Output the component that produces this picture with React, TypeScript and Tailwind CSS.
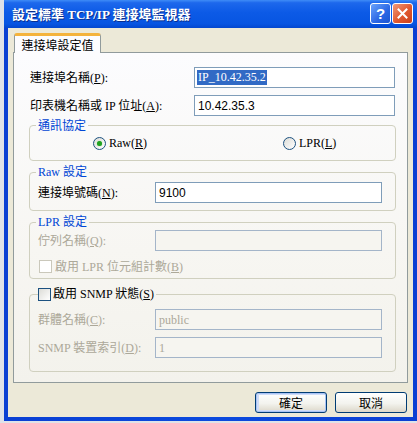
import React from "react";

const Mn = ({ t, k, colon = true }: { t: string; k: string; colon?: boolean }) => (
  <span className="whitespace-nowrap">
    {t}(<span className="underline">{k}</span>){colon ? ":" : ""}
  </span>
);

const Radio = ({ checked }: { checked?: boolean }) => (
  <span className="w-[13px] h-[13px] rounded-full border border-[#1c5180] bg-[linear-gradient(135deg,#dcdcd7,#ffffff)] flex items-center justify-center shrink-0">
    {checked && <span className="w-[5px] h-[5px] rounded-full bg-[#21a121] shadow-[0_0_1px_#5fcf5f]" />}
  </span>
);

const Check = ({ disabled }: { disabled?: boolean }) => (
  <span
    className={
      disabled
        ? "w-[13px] h-[13px] border border-[#cac8bb] bg-white shrink-0"
        : "w-[13px] h-[13px] border border-[#1c5180] bg-[linear-gradient(135deg,#dcdcd7,#ffffff)] shrink-0"
    }
  />
);

export default function App() {
  return (
    <div className="w-[417px] h-[423px] bg-[#dfe2e8] pl-[4px] overflow-hidden font-['Liberation_Serif','Noto_Sans_CJK_TC',serif] text-[12px] text-black">
      <div className="w-[413px] h-[421px] flex flex-col bg-[linear-gradient(to_right,#0a3fd3,#0b4ade_50%,#0a3fd3)]">
        {/* Title bar */}
        <div className="h-[28px] shrink-0 flex items-center pl-[8px] pr-[4px] bg-[linear-gradient(to_bottom,#3f8cf7_0%,#1d68ec_10%,#0c5ae6_45%,#0755e2_85%,#0347cf_100%)]">
          <span className="text-white font-bold text-[13px] leading-none [text-shadow:1px_1px_0_#0a2f8f] font-['Liberation_Serif','Noto_Sans_CJK_TC',serif]">
            設定標準 TCP/IP 連接埠監視器
          </span>
          <div className="ml-auto flex gap-[1px] mt-[-2px]">
            <div className="w-[21px] h-[21px] rounded-[3px] border border-white bg-[linear-gradient(135deg,#6aa3fb,#2a66e4_60%,#1d55d0)] flex items-center justify-center">
              <span className="text-white font-bold text-[15px] leading-none font-['Liberation_Sans',sans-serif]">?</span>
            </div>
            <div className="w-[21px] h-[21px] rounded-[3px] border border-white bg-[linear-gradient(135deg,#f09a7a,#e0582f_55%,#c8401c)] flex items-center justify-center">
              <svg width="11" height="11" viewBox="0 0 11 11">
                <path d="M1.5 1.5 L9.5 9.5 M9.5 1.5 L1.5 9.5" stroke="white" strokeWidth="2" strokeLinecap="square" />
              </svg>
            </div>
          </div>
        </div>

        {/* Client area */}
        <div className="relative h-[389px] mx-[4px] bg-[#ece9d8] flex flex-col pt-[5px]">
          {/* Tab */}
          <div className="pl-[6px] flex relative z-10">
            <div className="w-[87px] h-[20px] border-x border-[#919b9c] border-t-[3px] border-t-[#f4b33c] rounded-t-[3px] bg-[#fcfcfe] flex items-center justify-center -mb-px">
              <span className="font-['Noto_Sans_CJK_TC',sans-serif] text-[12px] leading-none">連接埠設定值</span>
            </div>
          </div>

          {/* Panel */}
          <div className="ml-[5px] w-[395px] h-[331px] border border-[#919b9c] bg-[linear-gradient(to_bottom,#fcfcfe,#f7f6f2_60%,#f3f2ec)] pt-[14px] pl-[16px] pr-[12px] flex flex-col">
            <div className="flex items-center h-[21px]">
              <div className="flex-1"><Mn t="連接埠名稱" k="P" /></div>
              <div className="w-[201px] h-[21px] border border-[#7f9db9] bg-white flex items-center pl-[2px]">
                <span className="bg-[#316ac5] text-white leading-[15px] px-[1px]">IP_10.42.35.2</span>
              </div>
            </div>
            <div className="flex items-center h-[21px] mt-[7px]">
              <div className="flex-1"><Mn t="印表機名稱或 IP 位址" k="A" /></div>
              <div className="w-[201px] h-[21px] border border-[#7f9db9] bg-white flex items-center pl-[3px] font-['Liberation_Sans',sans-serif]">
                10.42.35.3
              </div>
            </div>

            {/* 通訊協定 */}
            <fieldset className="-mx-[1px] mt-[1px] h-[44px] border border-[#d0d0bf] rounded-[4px] pt-[2px]">
              <legend className="ml-[6px] px-[2px] leading-[16px] text-[#0046d5] font-['Noto_Sans_CJK_TC',sans-serif]">通訊協定</legend>
              <div className="flex items-center h-[16px] pl-[63px]">
                <div className="w-[190px] flex items-center gap-[3px]">
                  <Radio checked />
                  <Mn t="Raw" k="R" colon={false} />
                </div>
                <div className="flex items-center gap-[3px]">
                  <Radio />
                  <Mn t="LPR" k="L" colon={false} />
                </div>
              </div>
            </fieldset>

            {/* Raw 設定 */}
            <fieldset className="-mx-[1px] mt-[3px] h-[47px] border border-[#d0d0bf] rounded-[4px] pt-[2px]">
              <legend className="ml-[6px] px-[2px] leading-[16px] text-[#0046d5]">Raw 設定</legend>
              <div className="flex items-center h-[21px] pl-[8px]">
                <div className="w-[117px]"><Mn t="連接埠號碼" k="N" /></div>
                <div className="w-[227px] h-[21px] border border-[#7f9db9] bg-white flex items-center pl-[3px] font-['Liberation_Sans',sans-serif]">
                  9100
                </div>
              </div>
            </fieldset>

            {/* LPR 設定 */}
            <fieldset className="-mx-[1px] mt-[3px] h-[65px] border border-[#d0d0bf] rounded-[4px]">
              <legend className="ml-[6px] px-[2px] leading-[16px] text-[#0046d5]">LPR 設定</legend>
              <div className="flex items-center h-[21px] pl-[8px]">
                <div className="w-[117px] text-[#aca899]"><Mn t="佇列名稱" k="Q" /></div>
                <div className="w-[227px] h-[21px] border border-[#a4b5c9] bg-[#f6f5f0]" />
              </div>
              <div className="flex items-center h-[13px] mt-[9px] pl-[9px] gap-[3px] text-[#aca899]">
                <Check disabled />
                <Mn t="啟用 LPR 位元組計數" k="B" colon={false} />
              </div>
            </fieldset>

            {/* SNMP */}
            <fieldset className="-mx-[1px] mt-[7px] h-[86px] border border-[#d0d0bf] rounded-[4px] pt-[7px]">
              <legend className="ml-[8px] pr-[2px] leading-[16px] h-[16px]">
                <span className="flex items-center gap-[2px] h-[16px]">
                  <Check />
                  <Mn t="啟用 SNMP 狀態" k="S" colon={false} />
                </span>
              </legend>
              <div className="flex items-center h-[21px] pl-[8px]">
                <div className="w-[117px] text-[#aca899]"><Mn t="群體名稱" k="C" /></div>
                <div className="w-[227px] h-[21px] border border-[#a4b5c9] bg-[#f6f5f0] flex items-center pl-[3px] text-[#aca899]">
                  public
                </div>
              </div>
              <div className="flex items-center h-[21px] pl-[8px] mt-[7px]">
                <div className="w-[117px] text-[#aca899]"><Mn t="SNMP 裝置索引" k="D" /></div>
                <div className="w-[227px] h-[21px] border border-[#a4b5c9] bg-[#f6f5f0] flex items-center pl-[3px] text-[#aca899]">
                  1
                </div>
              </div>
            </fieldset>
          </div>

          {/* Buttons */}
          <div className="flex justify-end gap-[8px] pr-[6px] mt-[9px]">
            <button className="w-[72px] h-[21px] border border-[#003c74] rounded-[3px] bg-[linear-gradient(to_bottom,#ffffff,#f3f3ee_55%,#dcd7c9)] shadow-[inset_0_0_0_1px_#a9c3f5,inset_1px_0_0_2px_#cfdcf8] flex items-center justify-center font-['Noto_Sans_CJK_TC',sans-serif] text-[12px] leading-none">
              確定
            </button>
            <button className="w-[72px] h-[21px] border border-[#003c74] rounded-[3px] bg-[linear-gradient(to_bottom,#ffffff,#f3f3ee_55%,#dcd7c9)] flex items-center justify-center font-['Noto_Sans_CJK_TC',sans-serif] text-[12px] leading-none">
              取消
            </button>
          </div>
        </div>
      </div>
    </div>
  );
}
